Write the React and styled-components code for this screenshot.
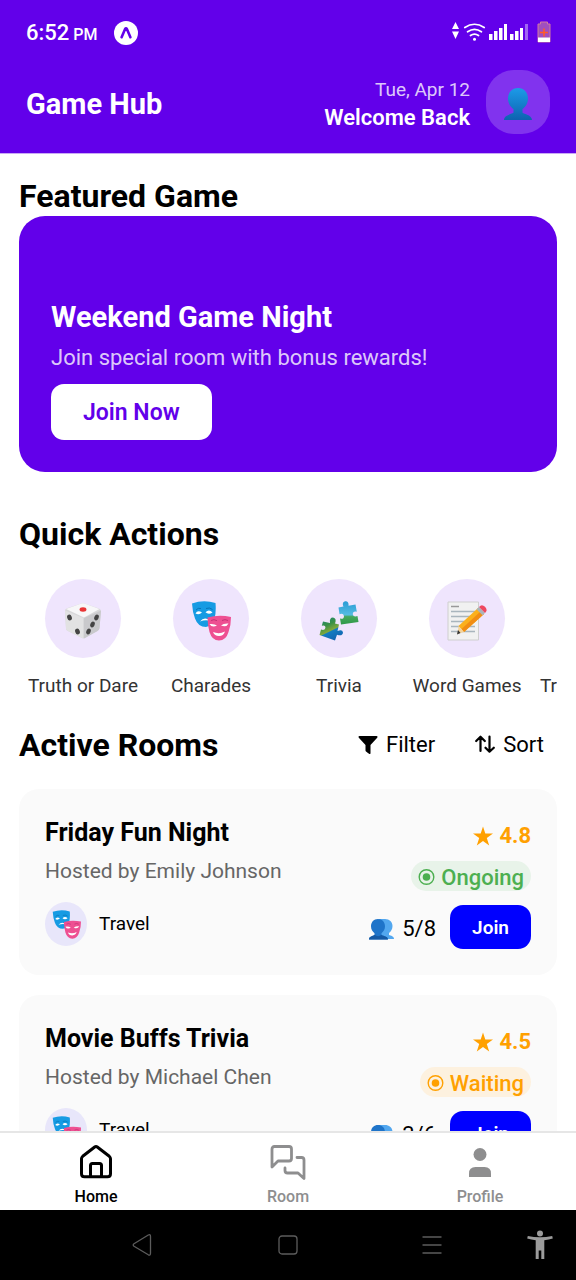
import React from "react";
import styled, { createGlobalStyle } from "styled-components";

const GlobalStyle = createGlobalStyle`
  * { box-sizing: border-box; }
  body { margin: 0; background: #fff; }
  body, button { font-family: Roboto, "Liberation Sans", sans-serif; }
  button { border: 0; padding: 0; background: none; color: inherit; cursor: pointer; }
  h1, h2, h3, p, ul { margin: 0; padding: 0; }
  ul { list-style: none; }
  svg { display: block; flex: none; }
`;

const purple = "#6200ea";

const Screen = styled.div`
  display: flex;
  flex-direction: column;
  height: 100vh;
  color: #000;
`;

const TopBar = styled.header`
  flex: none;
  background: ${purple};
  color: #fff;
  padding: 0 26px 19px;
  border-bottom: 1px solid #c9a9f5;
`;

const StatusBar = styled.div`
  display: flex;
  align-items: center;
  justify-content: space-between;
  height: 70px;
  padding-bottom: 5px;
  margin-right: -2px;
`;

const StatusGroup = styled.div`
  display: flex;
  align-items: center;
  gap: 16px;
`;

const Clock = styled.span`
  display: flex;
  align-items: baseline;
  gap: 4px;
  padding-top: 2px;
  font-size: 22px;
  line-height: 28px;
  font-weight: 500;
`;

const Meridiem = styled.span`
  font-size: 16px;
`;

const HeaderRow = styled.div`
  display: flex;
  align-items: center;
  justify-content: space-between;
`;

const AppTitle = styled.h1`
  padding-top: 4px;
  font-size: 29px;
  line-height: 36px;
  font-weight: 700;
`;

const UserArea = styled.div`
  display: flex;
  align-items: center;
  gap: 16px;
`;

const Greeting = styled.div`
  padding-top: 3px;
  text-align: right;
`;

const DateText = styled.p`
  font-size: 19px;
  line-height: 28px;
  color: rgba(255, 255, 255, 0.8);
`;

const Welcome = styled.p`
  font-size: 22px;
  line-height: 28px;
  font-weight: 600;
`;

const Avatar = styled.button`
  display: grid;
  place-items: center;
  width: 64px;
  height: 64px;
  padding-top: 4px;
  border-radius: 28px;
  background: rgba(255, 255, 255, 0.2);
`;

const Content = styled.main`
  flex: 1;
  min-height: 0;
  overflow-y: auto;
  scrollbar-width: none;
  padding: 22px 19px;
`;

const SectionTitle = styled.h2`
  font-size: 32px;
  line-height: 40px;
  font-weight: 700;
`;

const FeaturedCard = styled.section`
  display: flex;
  flex-direction: column;
  justify-content: flex-end;
  align-items: flex-start;
  min-height: 256px;
  padding: 32px;
  border-radius: 26px;
  background: ${purple};
  color: #fff;
  margin-bottom: 42px;
`;

const FeaturedTitle = styled.h3`
  font-size: 29px;
  line-height: 36px;
  font-weight: 700;
  margin-bottom: 9px;
`;

const FeaturedText = styled.p`
  font-size: 22px;
  line-height: 28px;
  color: rgba(255, 255, 255, 0.8);
  margin-bottom: 12px;
`;

const JoinNow = styled.button`
  height: 56px;
  padding: 2px 32px 0;
  border-radius: 13px;
  background: #fff;
  color: ${purple};
  font-size: 23px;
  line-height: 28px;
  font-weight: 600;
`;

const ActionStrip = styled.ul`
  display: flex;
  overflow-x: auto;
  scrollbar-width: none;
  margin: 25px 0 27px;
`;

const ActionButton = styled.button`
  display: flex;
  flex-direction: column;
  align-items: center;
  gap: 16px;
  width: 128px;
  font-size: 19px;
  line-height: 24px;
  color: #333;
  white-space: nowrap;
`;

const ActionIcon = styled.span`
  display: grid;
  place-items: center;
  width: 76px;
  height: 79px;
  padding-top: 4px;
  border-radius: 50%;
  background: #efe5fd;
`;

const RoomsHeader = styled.div`
  display: flex;
  align-items: center;
  justify-content: space-between;
  margin-bottom: 24px;
`;

const Tools = styled.div`
  display: flex;
  gap: 14px;
`;

const ToolButton = styled.button`
  display: flex;
  align-items: center;
  gap: 8px;
  padding: 0 13px;
  font-size: 22px;
  line-height: 28px;
`;

const RoomList = styled.ul`
  display: flex;
  flex-direction: column;
  gap: 20px;
`;

const RoomCard = styled.li`
  display: flex;
  justify-content: space-between;
  padding: 26px;
  border-radius: 20px;
  background: #fafafa;
`;

const RoomInfo = styled.div`
  display: flex;
  flex-direction: column;
`;

const RoomName = styled.h3`
  font-size: 25px;
  line-height: 36px;
  font-weight: 700;
  margin-bottom: 6px;
`;

const Host = styled.p`
  font-size: 21px;
  line-height: 28px;
  color: #666;
  margin-bottom: 17px;
`;

const Category = styled.div`
  display: flex;
  align-items: center;
  gap: 12px;
  font-size: 19px;
  line-height: 24px;
`;

const CategoryIcon = styled.span`
  display: grid;
  place-items: center;
  width: 42px;
  height: 44px;
  border-radius: 50%;
  background: #e8e6fa;
`;

const RoomStatus = styled.div`
  display: flex;
  flex-direction: column;
  align-items: flex-end;
`;

const Rating = styled.div`
  display: flex;
  align-items: center;
  gap: 6px;
  color: #ffa000;
  font-size: 22px;
  line-height: 42px;
  font-weight: 700;
  margin-bottom: 4px;
`;

const Badge = styled.div`
  display: flex;
  align-items: center;
  gap: 6px;
  height: 30px;
  padding: 3px 7px 0;
  border-radius: 15px;
  font-size: 22px;
  line-height: 28px;
  font-weight: 500;
  color: ${(p) => (p.$waiting ? "#ffa000" : "#4caf50")};
  background: ${(p) => (p.$waiting ? "#fdf1df" : "#e8f3e9")};
  margin-bottom: 14px;
`;

const JoinRow = styled.div`
  display: flex;
  align-items: center;
  gap: 14px;
`;

const Players = styled.span`
  display: flex;
  align-items: center;
  gap: 8px;
  padding-top: 4px;
  font-size: 22px;
  line-height: 28px;
`;

const JoinButton = styled.button`
  width: 81px;
  height: 44px;
  padding-top: 2px;
  border-radius: 13px;
  background: #00f;
  color: #fff;
  font-size: 19px;
  line-height: 24px;
  font-weight: 600;
`;

const TabBar = styled.nav`
  flex: none;
  display: grid;
  grid-template-columns: repeat(3, 1fr);
  height: 79px;
  border-top: 2px solid #e6e6e6;
  background: #fff;
`;

const Tab = styled.a`
  display: flex;
  flex-direction: column;
  align-items: center;
  gap: 7px;
  padding-top: 11px;
  font-size: 16px;
  line-height: 20px;
  font-weight: 500;
  text-decoration: none;
  color: ${(p) => (p.$active ? "#000" : "#8e8e8f")};
`;

const SystemNav = styled.nav`
  flex: none;
  display: grid;
  grid-template-columns: 2fr 2fr 2fr 1fr;
  padding-left: 12.5%;
  height: 70px;
  background: #000;
  color: #5c5c5c;
`;

const SystemKey = styled.button`
  display: grid;
  place-items: center;
`;

const AppBadgeIcon = () => (
  <svg width="24" height="24" viewBox="0 0 24 24">
    <circle cx="12" cy="12" r="12" fill="#fff" />
    <path d="M7.6 16.2 11 8.2q1-1.6 2 0l3.4 8" fill="none" stroke={purple} strokeWidth="2.6" strokeLinecap="round" strokeLinejoin="round" />
  </svg>
);

const SignalIcons = () => (
  <svg width="100" height="24" viewBox="0 0 100 24" fill="#fff">
    <path d="M3.5 1 7 8H0zM3.5 18 0 10.5h7z" />
    <g fill="none" stroke="#fff" strokeWidth="1.7" strokeLinecap="round">
      <path d="M12.8 6.5q9.7-6.500 19.400 0M15.600 10.800q6.900-4.800 13.800 0M18.500 14.500q4-2.900 8 0" />
    </g>
    <circle cx="22.500" cy="18.200" r="1.500" />
    <path d="M37 13h3.500v6H37zM42 10h3.500v9H42zM47 7h3.500v12H47zM52 3h3v16h-3zM58 13h3.500v6H58zM63 10h3.500v9H63zM68 7h3v12h-3z" />
    <path d="M73 3h3v16h-3z" opacity=".4" />
    <path d="M88.500 1h7v2h2.500v18H86V3h2.500z" fill="#a04fbe" stroke="#cf7ba0" />
    <path d="M86 16.500h12V21H86z" />
    <path d="M91.200 7.500h1.600v3.200H96v1.600h-3.200v3.200h-1.600v-3.200H88v-1.600h3.200z" fill="#ff5a2a" />
  </svg>
);

const PersonEmoji = () => (
  <svg width="28" height="32" viewBox="0 0 28 32">
    <defs>
      <linearGradient id="person" x1="0" y1="0" x2="0" y2="1">
        <stop offset="0" stopColor="#1c9be8" />
        <stop offset="1" stopColor="#0e62b0" />
      </linearGradient>
    </defs>
    <path d="M14 0c6 0 10 4.500 10 10.500 0 4.500-2.300 8.400-5.500 10.500v3.500c0 1.300 9.500 2 9.500 7.500H0c0-5.500 9.500-6.200 9.500-7.500V21C6.300 18.900 4 15 4 10.500 4 4.500 8 0 14 0z" fill="url(#person)" />
  </svg>
);

const PeopleEmoji = () => (
  <svg width="25" height="22" viewBox="0 0 25 22">
    <path d="M16 1c4.500 0 7.500 3 7.500 7 0 3-1.500 5.500-3.500 7v2c2 .8 5 1 5 4H10V1z" fill="#52a7ef" />
    <path d="M9 1c4.300 0 7 3.100 7 7.300 0 3-1.400 5.400-3.500 6.900v1.600c0 1.200 6.500 1 6.500 4.700H0c0-3.700 5.500-3.500 5.500-4.700v-1.600C3.400 13.700 2 11.300 2 8.300 2 4.100 4.700 1 9 1z" fill="#1f74c9" />
    <path d="M0 21.500c0-3.700 5.500-3.500 5.500-4.700 2.200 1.800 5.100 1.800 7 0 0 1.200 6.500 1 6.500 4.700z" fill="#1559a4" />
  </svg>
);

const DiceEmoji = () => (
  <svg width="38" height="38" viewBox="0 0 38 38">
    <path d="M17.500 1.500q1.500-.5 3 0L35 6.500q2 1 2 2.500L35.500 26q-.3 2-2 3L21 36q-1.500.8-3 0L4 29q-2-1-2-2.500L1 9q0-2 2-2.800z" fill="#d8d8da" />
    <path d="M17.500 1.500q1.500-.5 3 0L35.500 7 20 15.500 2 7z" fill="#f7f7f8" />
    <path d="M1 8.500 19 16v20.500L4 29q-2-1-2-2.500z" fill="#e2e2e3" />
    <path d="M20 16 37 8.500 35.500 26q-.3 2-2 3L20 36.500z" fill="#c9c9cc" />
    <ellipse cx="19" cy="7.500" rx="3.400" ry="2.200" fill="#e93434" />
    <g fill="#444">
      <ellipse cx="5.500" cy="15.500" rx="2.300" ry="3" transform="rotate(-20 5.500 15.500)" />
      <ellipse cx="13.500" cy="29.500" rx="2.300" ry="3" transform="rotate(-20 13.500 29.500)" />
      <ellipse cx="32.500" cy="15.500" rx="2.100" ry="3" transform="rotate(25 32.500 15.500)" />
      <ellipse cx="28.500" cy="22.500" rx="2.100" ry="3" transform="rotate(25 28.500 22.500)" />
      <ellipse cx="24.500" cy="29.500" rx="2.100" ry="3" transform="rotate(25 24.500 29.500)" />
    </g>
  </svg>
);

const MasksEmoji = ({ size }) => (
  <svg width={size} height={size} viewBox="0 0 40 40">
    <path d="M1 2.500q11.500-4 23.500-.5.8 9-1 15.500-2 7.500-8.500 8.500Q7 26 4 17.500 1.500 11 1 2.500z" fill="#169be3" />
    <path d="M4.500 12.500q2-4 6.500-1-3 3-6.500 1zM14.500 11.300q3.500-3.500 7 .2-4 2.500-7-.2zM9 20.500q4.500-5.500 10-.8-5-1.400-10 .8z" fill="#fff" />
    <path d="M5 9q2-2.500 5-1.500M15 7.500q3.500-1.500 6.500 1" fill="none" stroke="#0874b8" />
    <path d="M16.500 16.500q11.500-3.300 23.500-.5 0 8.500-2.500 15Q35 39.500 28 39.500q-7 0-9.500-8.500-2-7-2-14.500z" fill="#ee5092" />
    <path d="M18.500 23q2.500 4.200 7.500 1.500-2.500-2-7.500-1.500zM37.500 22.500q-2 4.200-7.500 2 2.500-2.300 7.500-2zM22 31q6 2.500 12-.5-1.500 4.500-6 4.500-4.600 0-6-4z" fill="#fff" />
    <path d="M20 19.500q3-1.800 6 .2M31 19.500q3-1.800 6 0" fill="none" stroke="#c43275" />
  </svg>
);

const PuzzleEmoji = () => (
  <svg width="40" height="40" viewBox="0 0 40 40">
    <defs>
      <linearGradient id="pieceTop" x1="0" y1="0" x2="0" y2="1">
        <stop offset="0" stopColor="#289bd5" />
        <stop offset=".58" stopColor="#55bce2" />
        <stop offset=".66" stopColor="#45a85c" />
        <stop offset="1" stopColor="#2e9848" />
      </linearGradient>
      <linearGradient id="pieceLow" x1="0" y1="0" x2=".5" y2="1">
        <stop offset="0" stopColor="#17877c" />
        <stop offset=".4" stopColor="#3b9146" />
        <stop offset=".64" stopColor="#80a83c" />
        <stop offset=".68" stopColor="#137cc0" />
        <stop offset="1" stopColor="#1268b3" />
      </linearGradient>
    </defs>
    <path d="M19.500 6.500 24.500 5.500q-2-4 1.500-5.200 4-.6 3.500 4.500l7-1.300 1.300 7.200q-4-.8-4 2.500.5 3.300 4.700 1.900l1 6-17.500 2.500-1-6q4 .8 4-2.700-.8-3-4.500-1.600z" fill="url(#pieceTop)" />
    <path d="m4 20.500 7 1.500q-.8-5.500 3-5.500 4 .7 2 6l4 1-1.500 6.500q5-2 5.500 1.500-.3 4-6 2.300L16 39.500.5 34 2 28.500q3.500 1.400 4.400-1.500.4-3.300-3.600-2.300z" fill="url(#pieceLow)" />
  </svg>
);

const MemoEmoji = () => (
  <svg width="40" height="40" viewBox="0 0 40 40">
    <path d="M1 1h30.500v38H1z" fill="#f1f1f1" stroke="#cfcfcf" />
    <path d="M4 5.500h8" stroke="#999" strokeWidth="1.500" />
    <path d="M4 10.500h24M4 15.500h24M4 20.500h24M4 25.500h24M4 30.500h24" stroke="#a9b5bd" strokeWidth="1.300" />
    <path d="m31 7 6 6-20 18-5.500-6z" fill="#fbb01c" />
    <path d="m34 10 3 3-20 18-2.500-3z" fill="#f18d13" />
    <path d="m11.500 25 5.500 6-6.500 2z" fill="#f5d49b" />
    <path d="m11 29 2.500 3-3.500 1.500z" fill="#333" />
    <path d="m29.500 8.300 2.500-2.300 6 6-2.500 2.300z" fill="#aab4ba" />
    <path d="m32 6 1.500-1.300q2-1.200 4.500 1.100 2.600 2.700 1 5L38 12z" fill="#ee4860" />
  </svg>
);

const FilterIcon = () => (
  <svg width="20" height="20" viewBox="0 0 20 20">
    <path d="M1.500 1h17q1.600.2.700 1.700L12.500 10v8.200q-.3 1.300-1.500.6l-3-2.300q-.5-.4-.5-1V10L.8 2.700Q0 1.200 1.500 1z" />
  </svg>
);

const SortIcon = () => (
  <svg width="20" height="20" viewBox="0 0 20 20" fill="none" stroke="#000" strokeWidth="2.200" strokeLinecap="round" strokeLinejoin="round">
    <path d="M5.500 16V2.200M1.200 6 5.500 1.700 9.800 6M14.500 1.500v15M10.500 12.700l4 4 4.300-4" />
  </svg>
);

const StarIcon = () => (
  <svg width="20" height="20" viewBox="0 0 20 20" fill="currentColor">
    <path d="m10 .5 2.300 7H20l-6.200 4.500 2.400 7.500L10 15l-6.200 4.500L6.200 12 0 7.500h7.700z" />
  </svg>
);

const StatusIcon = () => (
  <svg width="17" height="17" viewBox="0 0 17 17">
    <circle cx="8.500" cy="8" r="7.300" fill="none" stroke="currentColor" strokeWidth="1.400" />
    <circle cx="8.500" cy="8" r="3.800" fill="currentColor" />
  </svg>
);

const HomeIcon = () => (
  <svg width="36" height="36" viewBox="0 0 36 36" fill="none" stroke="currentColor" strokeWidth="3" strokeLinejoin="round">
    <path d="M4.700 12.300 16.700 3q1.300-1 2.600 0l12 9.300q1.200 1 1.200 2.500v15q0 3-3 3h-23q-3 0-3-3v-15q0-1.500 1.200-2.500zM12.500 32.500v-11q0-2 2-2h7q2 0 2 2v11" />
  </svg>
);

const ChatIcon = () => (
  <svg width="36" height="36" viewBox="0 0 36 36" fill="none" stroke="currentColor" strokeWidth="2.800" strokeLinecap="round" strokeLinejoin="round">
    <path d="M2 23V5q0-2.500 2.500-2.500H19q2.500 0 2.500 2.500v9.500Q21.500 17 19 17H8zM27 13.500h4.500Q34 13.500 34 16v18.500L28 29H17.500Q15 29 15 26.500V24" />
  </svg>
);

const ProfileIcon = () => (
  <svg width="36" height="36" viewBox="0 0 36 36" fill="currentColor">
    <circle cx="18" cy="10.500" r="6.500" />
    <path d="M7 33v-3.500q0-6.500 6.500-6.500h9q6.500 0 6.500 6.500V33z" />
  </svg>
);

const BackIcon = () => (
  <svg width="24" height="24" viewBox="0 0 24 24" fill="none" stroke="currentColor" strokeWidth="1.300" strokeLinejoin="round">
    <path d="M2 10.800 16.300 2q2.200-1 2.200 1.500v16.800q0 2.500-2.200 1.500L2 13.200q-1.600-1.200 0-2.400z" />
  </svg>
);

const HomeKeyIcon = () => (
  <svg width="20" height="20" viewBox="0 0 20 20" fill="none" stroke="currentColor" strokeWidth="1.300">
    <rect x="1" y="1" width="18" height="18" rx="3" />
  </svg>
);

const RecentsIcon = () => (
  <svg width="20" height="20" viewBox="0 0 20 20" stroke="currentColor" strokeWidth="1.300">
    <path d="M.5 2h19M.5 10h19M.5 18h19" />
  </svg>
);

const AccessibilityIcon = () => (
  <svg width="26" height="30" viewBox="0 0 26 30" fill="#9b9b9b">
    <circle cx="13" cy="3.600" r="3" />
    <path d="M.8 6q12.200 2.600 24.400 0l.6 2.600q-4 1.200-8.500 1.600V29h-3v-8.500h-2.600V29h-3V10.200Q4.200 9.800.2 8.600z" />
  </svg>
);

const actions = [
  { label: "Truth or Dare", icon: <DiceEmoji /> },
  { label: "Charades", icon: <MasksEmoji size={40} /> },
  { label: "Trivia", icon: <PuzzleEmoji /> },
  { label: "Word Games", icon: <MemoEmoji /> },
  { label: "Truth or Dare", icon: <DiceEmoji /> },
];

const rooms = [
  { name: "Friday Fun Night", host: "Emily Johnson", rating: "4.8", status: "Ongoing", players: "5/8" },
  { name: "Movie Buffs Trivia", host: "Michael Chen", rating: "4.5", status: "Waiting", players: "3/6" },
];

const tabs = [
  { label: "Home", icon: <HomeIcon />, active: true },
  { label: "Room", icon: <ChatIcon /> },
  { label: "Profile", icon: <ProfileIcon /> },
];

const Room = ({ room }) => (
  <RoomCard>
    <RoomInfo>
      <RoomName>{room.name}</RoomName>
      <Host>Hosted by {room.host}</Host>
      <Category>
        <CategoryIcon><MasksEmoji size={29} /></CategoryIcon>
        Travel
      </Category>
    </RoomInfo>
    <RoomStatus>
      <Rating><StarIcon />{room.rating}</Rating>
      <Badge $waiting={room.status === "Waiting"}><StatusIcon />{room.status}</Badge>
      <JoinRow>
        <Players><PeopleEmoji />{room.players}</Players>
        <JoinButton>Join</JoinButton>
      </JoinRow>
    </RoomStatus>
  </RoomCard>
);

export default function App() {
  return (
    <Screen>
      <GlobalStyle />
      <TopBar>
        <StatusBar>
          <StatusGroup>
            <Clock>6:52 <Meridiem>PM</Meridiem></Clock>
            <AppBadgeIcon />
          </StatusGroup>
          <SignalIcons />
        </StatusBar>
        <HeaderRow>
          <AppTitle>Game Hub</AppTitle>
          <UserArea>
            <Greeting>
              <DateText>Tue, Apr 12</DateText>
              <Welcome>Welcome Back</Welcome>
            </Greeting>
            <Avatar aria-label="Profile"><PersonEmoji /></Avatar>
          </UserArea>
        </HeaderRow>
      </TopBar>
      <Content>
        <SectionTitle>Featured Game</SectionTitle>
        <FeaturedCard>
          <FeaturedTitle>Weekend Game Night</FeaturedTitle>
          <FeaturedText>Join special room with bonus rewards!</FeaturedText>
          <JoinNow>Join Now</JoinNow>
        </FeaturedCard>
        <SectionTitle>Quick Actions</SectionTitle>
        <ActionStrip>
          {actions.map((a, i) => (
            <li key={i}>
              <ActionButton>
                <ActionIcon>{a.icon}</ActionIcon>
                {a.label}
              </ActionButton>
            </li>
          ))}
        </ActionStrip>
        <RoomsHeader>
          <SectionTitle>Active Rooms</SectionTitle>
          <Tools>
            <ToolButton><FilterIcon />Filter</ToolButton>
            <ToolButton><SortIcon />Sort</ToolButton>
          </Tools>
        </RoomsHeader>
        <RoomList>
          {rooms.map((r) => <Room key={r.name} room={r} />)}
        </RoomList>
      </Content>
      <TabBar>
        {tabs.map((t) => (
          <Tab key={t.label} href="#" $active={t.active}>
            {t.icon}
            {t.label}
          </Tab>
        ))}
      </TabBar>
      <SystemNav>
        <SystemKey aria-label="Back"><BackIcon /></SystemKey>
        <SystemKey aria-label="Home"><HomeKeyIcon /></SystemKey>
        <SystemKey aria-label="Recent apps"><RecentsIcon /></SystemKey>
        <SystemKey aria-label="Accessibility"><AccessibilityIcon /></SystemKey>
      </SystemNav>
    </Screen>
  );
}
